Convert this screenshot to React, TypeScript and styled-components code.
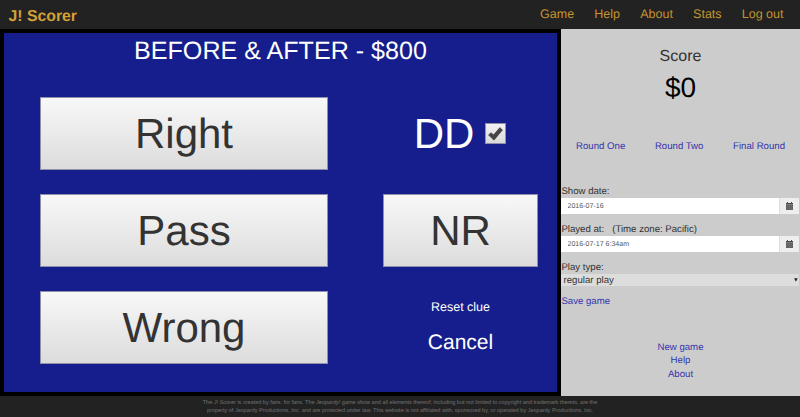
import React from "react";
import styled, { createGlobalStyle } from "styled-components";

const GlobalStyle = createGlobalStyle`
  * { box-sizing: border-box; }
  body {
    margin: 0;
    background: #222;
    font-family: "Liberation Sans", Arial, sans-serif;
    text-rendering: geometricPrecision;
    overflow: hidden;
  }
  a { text-decoration: none; color: inherit; }
`;

const Page = styled.div`
  width: 800px;
  height: 417px;
  display: grid;
  grid-template-rows: 29px 367px 21px;
  background: #222;
`;

const Header = styled.header`
  display: flex;
  justify-content: space-between;
  padding: 0 16.5px 0 8.5px;
  color: #d3a136;
`;

const Brand = styled.a`
  font-size: 15.8px;
  font-weight: bold;
  line-height: 33px;
`;

const Nav = styled.nav`
  display: flex;
  gap: 20.2px;
  font-size: 12.5px;
  line-height: 28px;
  color: #c4942f;
`;

const Main = styled.main`
  display: grid;
  grid-template-columns: 561px 239px;
`;

const Board = styled.section`
  border: 4px solid #000;
  background: #151e8c;
  color: #fff;
`;

const ClueTitle = styled.h1`
  margin: 0;
  height: 64px;
  font-size: 25.1px;
  font-weight: normal;
  line-height: 36px;
  text-align: center;
`;

const Answers = styled.div`
  display: grid;
  grid-template-columns: 288px 155px;
  grid-template-rows: repeat(3, 73px);
  column-gap: 55px;
  row-gap: 24px;
  padding-left: 36px;
`;

const AnswerButton = styled.button`
  padding: 0;
  border: 1px solid #8e90a8;
  background: linear-gradient(#f8f8f8, #dcdcdc);
  color: #333;
  font-family: inherit;
  font-size: 42px;
  line-height: 71px;
  text-rendering: inherit;
`;

const DailyDouble = styled.label`
  display: flex;
  align-items: center;
  justify-content: center;
  gap: 11px;
  padding-right: 1px;
  font-size: 42px;
  line-height: 73px;
`;

const CheckBox = styled.span`
  width: 21px;
  height: 21px;
  display: grid;
  place-items: center;
  border: 1px solid #8e90a8;
  background: linear-gradient(#f2f2f2, #dadada);
`;

const ClueLinks = styled.div`
  display: flex;
  flex-direction: column;
  align-items: center;
  padding: 8px 0 0;
`;

const ClueLink = styled.a<{ $large?: boolean }>`
  font-size: ${(p) => (p.$large ? "21px" : "12.5px")};
  line-height: ${(p) => (p.$large ? "40px" : "16px")};
  margin-top: ${(p) => (p.$large ? "8px" : "0")};
`;

const Sidebar = styled.aside`
  display: flex;
  flex-direction: column;
  background: #ccc;
  color: #333;
  font-size: 9.65px;
`;

const ScoreLabel = styled.div`
  margin-top: 18px;
  font-size: 16px;
  line-height: 20px;
  text-align: center;
`;

const ScoreValue = styled.div`
  margin-top: 3px;
  font-size: 28px;
  line-height: 35px;
  text-align: center;
  color: #000;
`;

const Rounds = styled.div`
  display: flex;
  justify-content: space-between;
  margin-top: 35px;
  padding: 0 15px;
  line-height: 14px;
  color: #3434ad;
`;

const Form = styled.form`
  margin-top: 30px;
`;

const Label = styled.label`
  display: block;
  height: 14px;
  padding-left: 0.4px;
  line-height: 16px;
  white-space: pre;
`;

const InputGroup = styled.div`
  display: flex;
  height: 16px;
  margin-bottom: 8px;
  padding-right: 1px;
`;

const Input = styled.input`
  flex: 1;
  min-width: 0;
  border: 0;
  padding: 0 6.5px;
  background: #fff;
  color: #555;
  font-family: inherit;
  font-size: 7.05px;
  text-rendering: inherit;
`;

const Addon = styled.span`
  width: 20px;
  display: grid;
  place-items: center;
  border-left: 1px solid #ddd;
  background: #eee;
`;

const Select = styled.div`
  display: flex;
  align-items: center;
  justify-content: space-between;
  height: 12px;
  margin: 0 1px 0 0;
  padding: 0 1px 0 2.5px;
  background: #ddd;
  line-height: 14px;
`;

const SelectValue = styled.span`
  padding-top: 1px;
`;

const SaveLink = styled.a`
  display: block;
  margin-top: 9px;
  padding-left: 0.4px;
  line-height: 14px;
  color: #3434ad;
`;

const SideLinks = styled.nav`
  display: flex;
  flex-direction: column;
  align-items: center;
  margin-top: 32px;
  line-height: 13.4px;
  color: #3434ad;
`;

const Footer = styled.footer`
  padding-top: 3px;
  font-size: 5.52px;
  line-height: 8px;
  text-align: center;
  color: #737373;
`;

const Calendar = () => (
  <svg width="8" height="8" viewBox="0 0 8 8">
    <path d="M0 1h1V0h1v1h3V0h1v1h1v1.5H0z" fill="#4a4a4a" />
    <path d="M0 2.5h7V8H0z" fill="#5e5e5e" />
    <path d="M0 4.3h7M0 6.1h7M1.8 2.8V8M3.5 2.8V8M5.2 2.8V8" stroke="#858585" strokeWidth=".3" />
  </svg>
);

const Check = () => (
  <svg width="17" height="17" viewBox="0 0 17 17">
    <path d="M1.5 10L4 7.7l2.6 2.1L12.8 2.6l2.7 2.4L7 15.2z" fill="#444" stroke="#444" strokeWidth=".6" />
  </svg>
);

const Caret = () => (
  <svg width="4" height="4" viewBox="0 0 4 4">
    <path d="M.1 .3h3.6L1.9 3.8z" fill="#222" />
  </svg>
);

export default function App() {
  return (
    <>
      <GlobalStyle />
      <Page>
        <Header>
          <Brand>J! Scorer</Brand>
          <Nav>
            {["Game", "Help", "About", "Stats", "Log out"].map((item) => (
              <a key={item}>{item}</a>
            ))}
          </Nav>
        </Header>
        <Main>
          <Board>
            <ClueTitle>BEFORE &amp; AFTER - $800</ClueTitle>
            <Answers>
              <AnswerButton>Right</AnswerButton>
              <DailyDouble>
                DD
                <CheckBox role="checkbox" aria-checked="true">
                  <Check />
                </CheckBox>
              </DailyDouble>
              <AnswerButton>Pass</AnswerButton>
              <AnswerButton>NR</AnswerButton>
              <AnswerButton>Wrong</AnswerButton>
              <ClueLinks>
                <ClueLink>Reset clue</ClueLink>
                <ClueLink $large>Cancel</ClueLink>
              </ClueLinks>
            </Answers>
          </Board>
          <Sidebar>
            <ScoreLabel>Score</ScoreLabel>
            <ScoreValue>$0</ScoreValue>
            <Rounds>
              <a>Round One</a>
              <a>Round Two</a>
              <a>Final Round</a>
            </Rounds>
            <Form>
              <Label>Show date:</Label>
              <InputGroup>
                <Input defaultValue="2016-07-16" />
                <Addon><Calendar /></Addon>
              </InputGroup>
              <Label>{"Played at:   (Time zone: Pacific)"}</Label>
              <InputGroup>
                <Input defaultValue="2016-07-17 6:34am" />
                <Addon><Calendar /></Addon>
              </InputGroup>
              <Label>Play type:</Label>
              <Select>
                <SelectValue>regular play</SelectValue>
                <Caret />
              </Select>
              <SaveLink>Save game</SaveLink>
            </Form>
            <SideLinks>
              <a>New game</a>
              <a>Help</a>
              <a>About</a>
            </SideLinks>
          </Sidebar>
        </Main>
        <Footer>
          The <i>J! Scorer</i> is created by fans, for fans. The <i>Jeopardy!</i> game show and all elements thereof, including but not limited to copyright and trademark thereto, are the
          <br />
          property of Jeopardy Productions, Inc. and are protected under law. This website is not affiliated with, sponsored by, or operated by Jeopardy Productions, Inc.
        </Footer>
      </Page>
    </>
  );
}
